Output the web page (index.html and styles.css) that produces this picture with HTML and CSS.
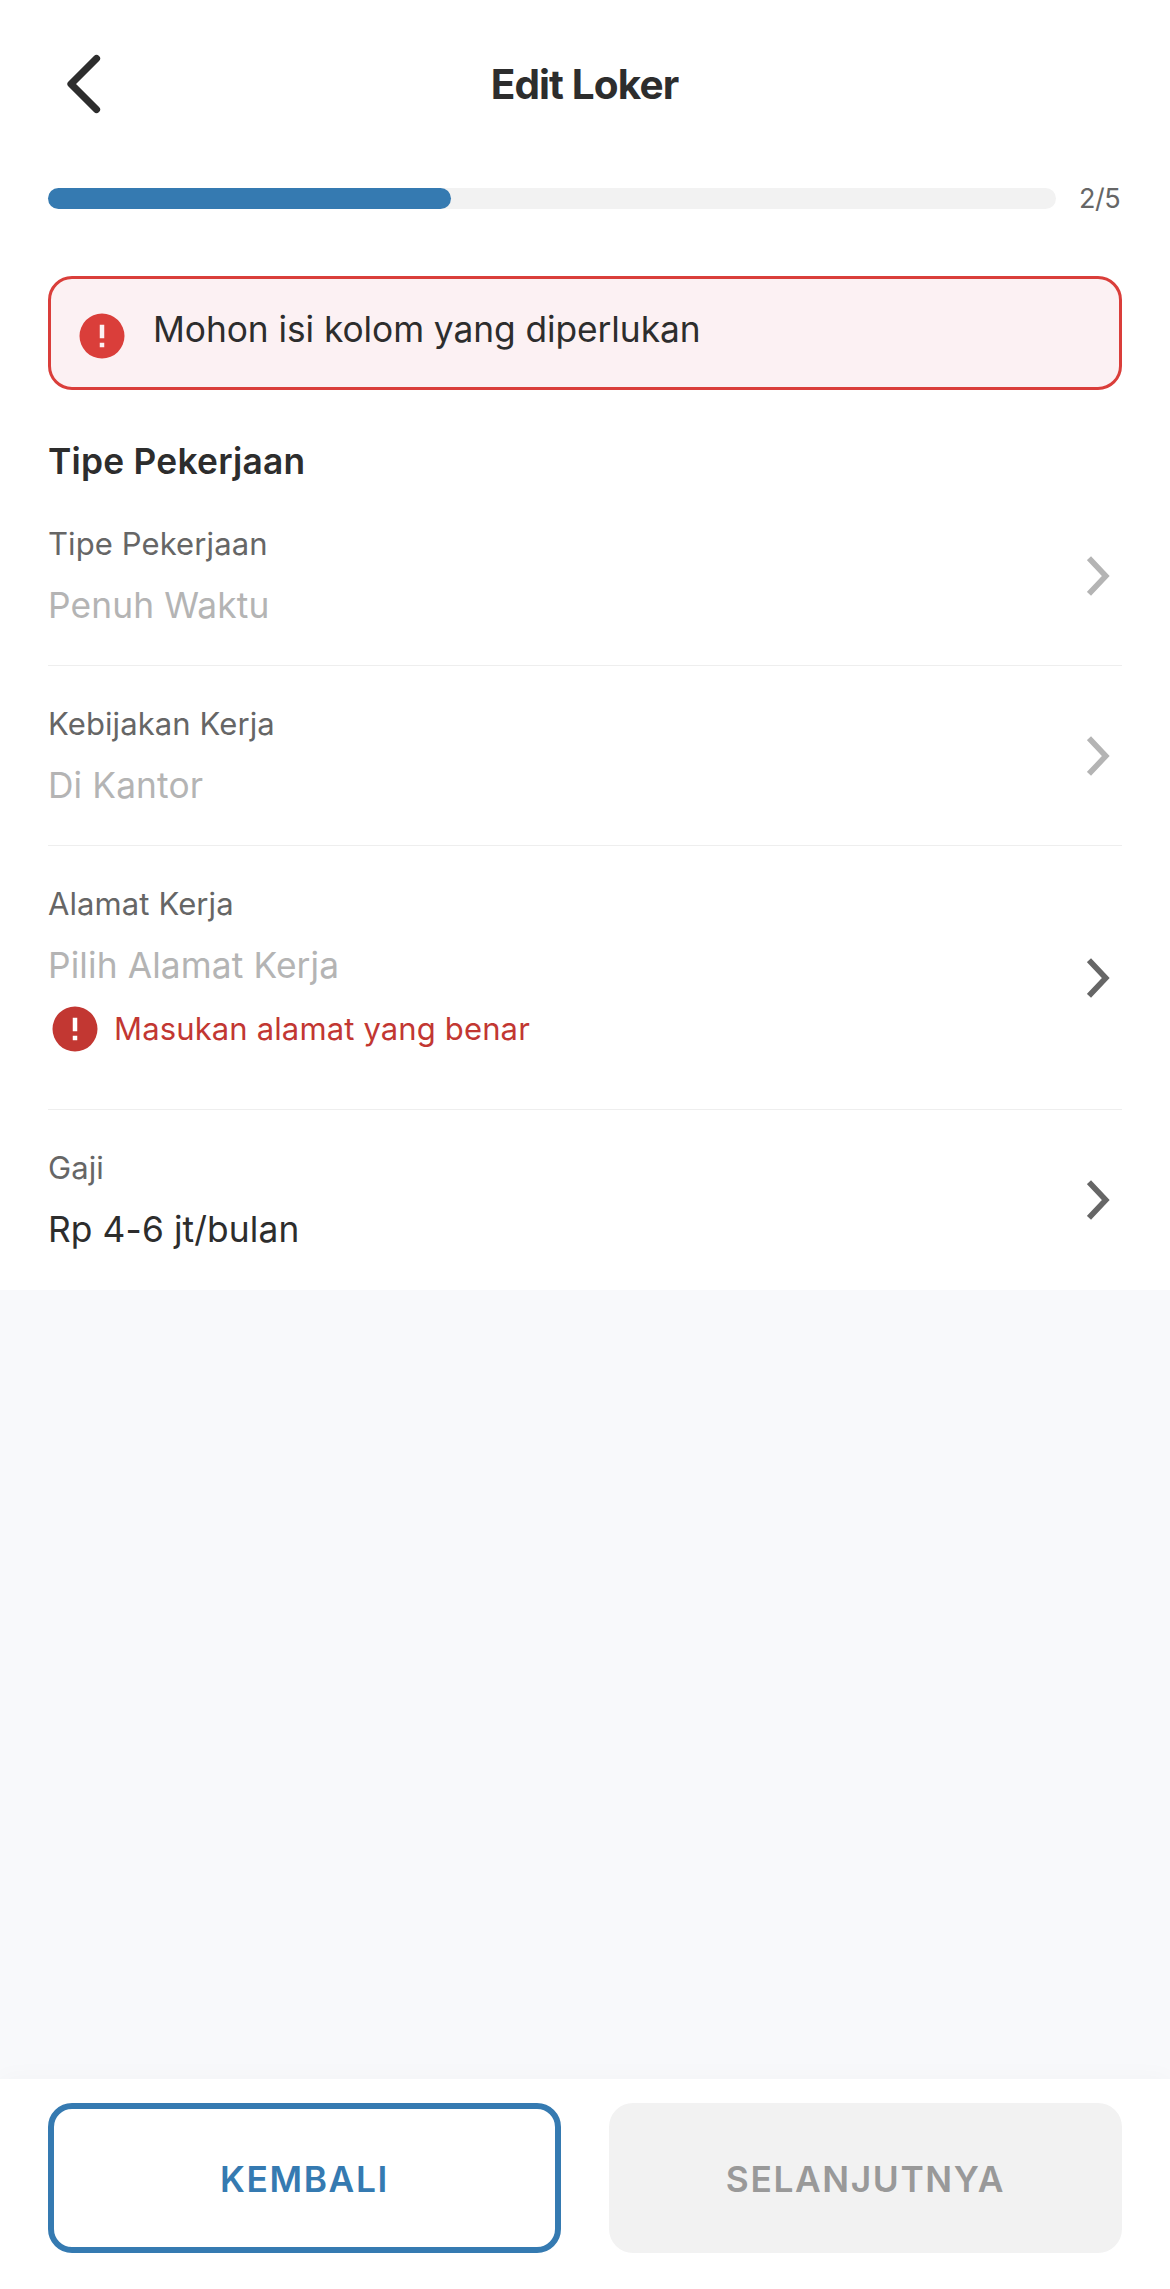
FILE: index.html
```html
<!DOCTYPE html>
<html lang="id">
<head>
<meta charset="utf-8">
<title>Edit Loker</title>
<link rel="stylesheet" href="styles.css">
</head>
<body>
<svg class="sprite" aria-hidden="true">
  <symbol id="alert-icon" viewBox="0 0 24 24">
    <path fill="currentColor" d="M12 2a10 10 0 1 0 0 20a10 10 0 0 0 0-20zM13 17h-2v-2h2zM13 13h-2V7h2z"/>
  </symbol>
  <symbol id="chevron" viewBox="0 0 24 42">
    <path d="M2 3.2L18.8 21L2 38.8" fill="none" stroke="currentColor" stroke-width="5.6" stroke-miterlimit="10"/>
  </symbol>
</svg>
<div class="screen">
  <div class="content">
    <header class="header">
      <svg class="back" viewBox="0 0 36 62"><path d="M31.5 5.5L6 31L31.5 56.5" fill="none" stroke="currentColor" stroke-width="7.2" stroke-linecap="round" stroke-linejoin="round"/></svg>
      <h1 class="title">Edit Loker</h1>
    </header>
    <div class="progress">
      <div class="track"><div class="bar" style="width: 40%"></div></div>
      <span class="step">2/5</span>
    </div>
    <div class="alert">
      <svg class="alert-icon"><use href="#alert-icon"/></svg>
      <span class="alert-text">Mohon isi kolom yang diperlukan</span>
    </div>
    <h2 class="section">Tipe Pekerjaan</h2>
    <div class="row disabled">
      <div class="field">
        <div class="label">Tipe Pekerjaan</div>
        <div class="value placeholder">Penuh Waktu</div>
      </div>
      <svg class="chevron"><use href="#chevron"/></svg>
    </div>
    <div class="row disabled">
      <div class="field">
        <div class="label">Kebijakan Kerja</div>
        <div class="value placeholder">Di Kantor</div>
      </div>
      <svg class="chevron"><use href="#chevron"/></svg>
    </div>
    <div class="row tall">
      <div class="field">
        <div class="label">Alamat Kerja</div>
        <div class="value placeholder">Pilih Alamat Kerja</div>
        <div class="error">
          <svg class="alert-icon"><use href="#alert-icon"/></svg>
          <span class="error-text">Masukan alamat yang benar</span>
        </div>
      </div>
      <svg class="chevron"><use href="#chevron"/></svg>
    </div>
    <div class="row">
      <div class="field">
        <div class="label">Gaji</div>
        <div class="value">Rp 4-6 jt/bulan</div>
      </div>
      <svg class="chevron"><use href="#chevron"/></svg>
    </div>
  </div>
  <footer class="footer">
    <button class="button outline">KEMBALI</button>
    <button class="button muted">SELANJUTNYA</button>
  </footer>
</div>
</body>
</html>
```

FILE: styles.css
```css
* { box-sizing: border-box; }

body {
  margin: 0;
  font-family: Inter, "Liberation Sans", sans-serif;
  color: #2d2d2d;
  background: #f8f9fb;
}

svg { display: block; flex: none; }

.sprite { display: none; }

.screen {
  display: flex;
  flex-direction: column;
  justify-content: space-between;
  height: 2289px;
}

.content {
  height: 1290px;
  padding: 0 48px;
  background: #fff;
}

.header {
  display: grid;
  grid-template-columns: 36px 1fr 36px;
  align-items: center;
  height: 168px;
  padding: 0 17px;
}

.back { width: 36px; height: 62px; }

.title {
  margin: 0;
  padding: 2px 1px 0 0;
  font-size: 40.5px;
  font-weight: 700;
  line-height: 60px;
  letter-spacing: -0.88px;
  text-align: center;
}

.progress {
  display: flex;
  align-items: center;
  height: 60px;
}

.track {
  width: 1008px;
  height: 21px;
  border-radius: 11px;
  background: #f2f2f2;
}

.bar {
  height: 100%;
  border-radius: 11px;
  background: #357ab1;
}

.step {
  margin-left: 23px;
  padding-top: 1px;
  font-size: 27px;
  line-height: 36px;
  letter-spacing: -0.5px;
  color: #666;
}

.alert {
  display: flex;
  align-items: flex-start;
  height: 114px;
  margin-top: 48px;
  padding: 0 24px;
  border: 3px solid #da3e3a;
  border-radius: 24px;
  background: #fcf1f3;
}

.alert-icon { width: 54px; height: 54px; }

.alert .alert-icon { margin-top: 30px; color: #da3e3a; }

.alert-text {
  margin: 24px 0 0 24px;
  font-size: 35.3px;
  line-height: 54px;
  letter-spacing: -0.06px;
}

.section {
  margin: 47px 0 -1px;
  font-size: 35.3px;
  font-weight: 600;
  line-height: 50px;
  letter-spacing: 0.25px;
}

.row {
  display: flex;
  align-items: center;
  justify-content: space-between;
  height: 180px;
  padding-right: 11px;
  border-bottom: 1px solid #eee;
  color: #666;
}

.row.tall { height: 264px; }

.row:last-child { border-bottom: none; }

.row.disabled .chevron { color: #b4b4b4; }

.field { align-self: flex-start; padding-top: 34px; }

.label {
  font-size: 31px;
  line-height: 48px;
  letter-spacing: 0.1px;
}

.value {
  margin-top: 11px;
  font-size: 35.3px;
  line-height: 54px;
  letter-spacing: 0.12px;
  color: #2d2d2d;
}

.value.placeholder { color: #b4b4b4; }

.chevron { width: 24px; height: 42px; }

.error {
  display: flex;
  align-items: center;
  gap: 12px;
  height: 54px;
  margin-top: 9px;
  color: #c23732;
}

.error-text {
  font-size: 31px;
  line-height: 48px;
  letter-spacing: 0.14px;
}

.footer {
  display: grid;
  grid-template-columns: 513px 513px;
  gap: 48px;
  height: 210px;
  padding: 24px 48px 36px;
  background: #fff;
  box-shadow: 0 0 24px rgba(0, 0, 0, 0.03);
}

.button {
  height: 150px;
  padding: 2px 0 0;
  border: none;
  border-radius: 24px;
  font-family: inherit;
  font-size: 35.3px;
  font-weight: 600;
  letter-spacing: 1.63px;
}

.outline {
  border: 6px solid #357ab1;
  background: #fff;
  color: #357ab1;
}

.muted {
  background: #f2f2f2;
  color: #999;
}
```
